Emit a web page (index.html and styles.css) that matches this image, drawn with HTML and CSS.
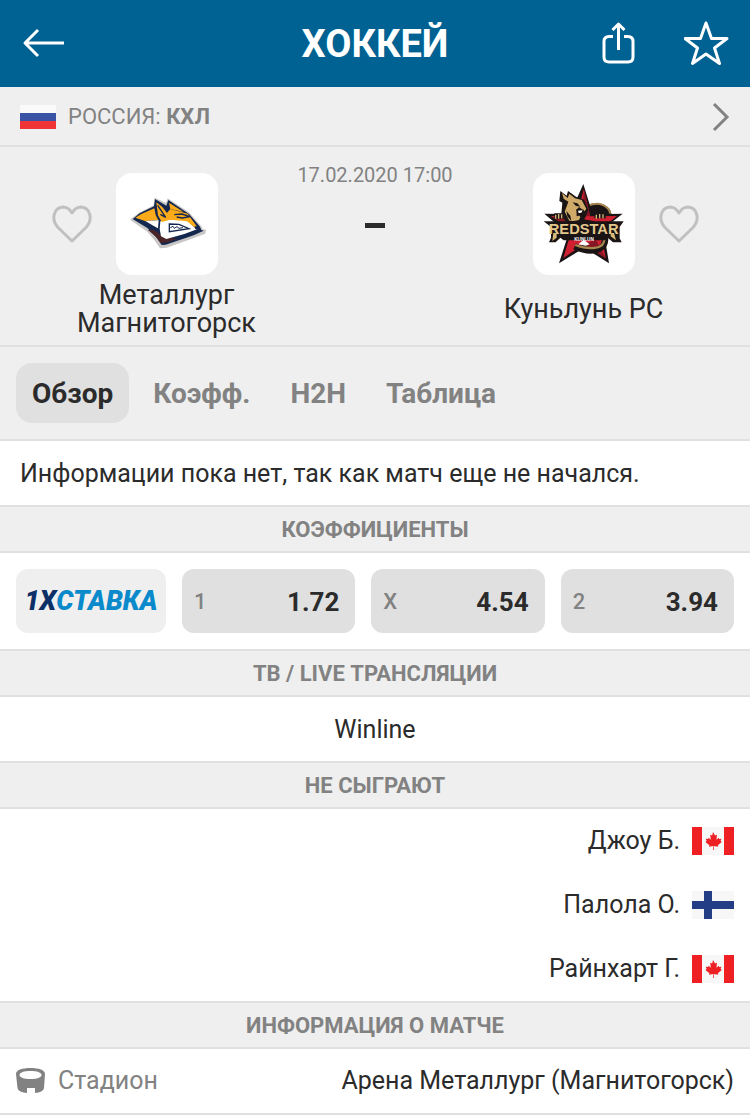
FILE: index.html
```html
<!DOCTYPE html>
<html lang="ru">
<head>
  <meta charset="UTF-8">
  <meta name="viewport" content="width=device-width, initial-scale=1.0">
  <title>Металлург Магнитогорск - Куньлунь РС</title>
  <link rel="stylesheet" href="styles.css">
</head>
<body>

  <!-- shared flag drawings -->
  <svg class="symbols" aria-hidden="true">
    <symbol id="flag-ca" viewBox="0 0 42 28">
      <path fill="#f7f7f7" d="M0 0h42v28H0z"/>
      <path fill="#ee2024" d="M0 0h10v28H0zM32 0h10v28H32z"/>
      <path fill="#ee2024" d="M21 5l2 3.500 2-.8-.6 5 2.200-2 .5 1.400 2.300-.4-.8 2.400 1.200.9-4 3.300.5 1.400-4.400-.6.1 4h-.8l.1-4-4.400.6.5-1.400-4-3.300 1.200-.9-.8-2.400 2.300.4.500-1.400 2.200 2-.6-5 2 .8z"/>
    </symbol>
    <symbol id="flag-fi" viewBox="0 0 42 28">
      <path fill="#f7f7f7" d="M0 0h42v28H0z"/>
      <path fill="#233e85" d="M12 0h8v28h-8zM0 10h42v8H0z"/>
    </symbol>
    <symbol id="heart" viewBox="0 0 40 40">
      <path fill="none" stroke="#c0c0c0" stroke-width="3" stroke-linejoin="round" d="M20 37L6 23.500C-1.500 15 2 3.500 11 3c4.500 0 7 2.500 9 6 2-3.500 4.500-6 9-6 9 .5 12.500 12 5 20.500z"/>
    </symbol>
  </svg>

  <header class="topbar">
    <button class="icon-btn back" aria-label="Назад">
      <svg width="44" height="32" viewBox="0 0 44 32"><path d="M44 15H5M18 2L5 15l13 13"/></svg>
    </button>
    <h1>ХОККЕЙ</h1>
    <div class="topbar-actions">
      <button class="icon-btn" aria-label="Поделиться">
        <svg width="34" height="44" viewBox="0 0 34 44"><path d="M11 14.500H7q-5 0-5 5V35q0 5 5 5h19q5 0 5-5V19.500q0-5-5-5h-4M16.500 28V2M10.500 8l6-6 6 6"/></svg>
      </button>
      <button class="icon-btn" aria-label="В избранное">
        <svg width="46" height="46" viewBox="0 0 46 46"><path d="M22 2l5.500 15.500H43L30.500 27l5 15.500L22 33 8.500 42.500l5-15.500L1 17.500h15.500z"/></svg>
      </button>
    </div>
  </header>

  <a class="league" href="#">
    <svg class="flag-ru" width="36" height="24" viewBox="0 0 36 24">
      <path fill="#fafafa" d="M0 0h36v8H0z"/>
      <path fill="#3a54a5" d="M0 8h36v8H0z"/>
      <path fill="#ef3337" d="M0 16h36v8H0z"/>
    </svg>
    <span>РОССИЯ: <b>КХЛ</b></span>
    <svg class="chevron" width="18" height="30" viewBox="0 0 18 30"><path d="M2 2l13 13L2 28"/></svg>
  </a>

  <section class="match">
    <div class="team home">
      <button class="icon-btn fav" aria-label="В избранное: Металлург"><svg width="40" height="40"><use href="#heart"/></svg></button>
      <div class="crest">
        <svg viewBox="-12 -21 306 306">
          <!-- silver edge, then navy body -->
          <path fill="#c9c6c6" d="M30 119L55 100 101 76l2-23 35 15 5-13 64 42 38 43 3 8 10 1-2 12-32 12-84 30-20 2-15-22-22-27z"/>
          <path fill="#14274f" d="M38 117L60 99l42-20 3-22 34 20 6-17 62 42 33 38 4 10 7 2-30 14-84 28-12 1-15-22-28-29z"/>
          <path fill="#4a2428" d="M84 150l24 20 14 19 20-2 30-10-40-6-30-21z"/>
          <path fill="#fbaa19" d="M46 113l18-11 39-17 4 20 8 16-40 2z"/>
          <path fill="#fff" d="M76 123l40-2-2 24-14-8z"/>
          <!-- muzzle -->
          <path fill="#fff" d="M121 124l28-6 52 2 24 24 6 4-38 14-54 15-16-8-4-22z"/>
          <path fill="#fbaa19" d="M109 67l18 14 14 18 10-12 52 14 27 38-7 3-22-18-50-5-26 7-11-20z"/>
          <path fill="#fbaa19" d="M147 68l44 28-40-9z"/>
          <path fill="none" stroke="#14274f" stroke-width="4" d="M113 76l24 36-16-9M163 104l22-2 25 8-23 4-17-3"/>
          <path fill="#fff" stroke="#14274f" stroke-width="4" d="M148 132l29 1 30 13-59 9z"/>
          <path fill="none" stroke="#14274f" stroke-width="3" d="M151 143l8-4 4 6 8-5 6 5 12-2"/>
          <path fill="#14274f" d="M224 139l8 2 3 8-9-2z"/>
        </svg>
      </div>
      <p class="team-name">Металлург<br>Магнитогорск</p>
    </div>

    <div class="score">
      <time datetime="2020-02-17T17:00">17.02.2020 17:00</time>
      <span class="dash"></span>
    </div>

    <div class="team away">
      <div class="crest">
        <svg viewBox="-6 -6 306 306">
          <!-- dragon body behind the star -->
          <ellipse cx="183" cy="118" rx="46" ry="33" fill="#1b1415"/>
          <path fill="none" stroke="#a98750" stroke-width="6" d="M160 92c34-14 62 2 66 24"/>
          <path fill="#1b1415" d="M145 27l28 91 90-2-58 45 17 104-74-47-76 47 28-88-72-61 77 1z"/>
          <path fill="#d01f30" d="M146 43l19 81 81-1-49 39 15 88-65-43-62 42 25-84-62-42 78 1z"/>
          <path fill="#861624" d="M147 43l19 81h-25zM148 207l64 43-29-55zM48 124l62 14-8 18z"/>
          <path fill="none" stroke="#1b1415" stroke-width="19" d="M210 186c6 48-52 47-91 28"/>
          <path fill="none" stroke="#a98750" stroke-width="7" d="M208 190c2 36-50 34-87 20"/>
          <path fill="#fff" d="M130 208l16-14 18 14-12 4z"/>
          <!-- head -->
          <path fill="#1b1415" d="M76 48l19 14 4-14 24 17 24 9 13 30-10 26-19 27-34-8-18-32 3-34-9-5z"/>
          <path fill="#cfaa69" d="M81 54l17 15 5-13 17 14 20 5 14 26-5 8-17-13-8 9 12 22-7 14-26-4-14-27 11-30-14-9z"/>
          <path fill="#1b1415" d="M113 82l14 3 9 10-14-3zM124 103l23 1-9 17-13 3zM94 108l12 14 3 16-12-14z"/>
          <path fill="#fff" d="M129 107l14-1-4 7-8 1z"/>
          <!-- claws -->
          <path stroke="#1b1415" stroke-width="17" d="M58 123h30M178 121h34"/>
          <path stroke="#d6b878" stroke-width="4" d="M62 119v12M71 117v14M80 118v12M184 119v12M194 117v13M204 118v12"/>
          <path fill="#1b1415" d="M26 139h86l34-6 34 6h86l-12 17v34l6 12h-26l-16-14-8 8H86l-10-8-14 14H42l6-14v-32z"/>
          <path fill="#d6b878" d="M55 174h10v14l-13 10zM227 174h10l6 22-16-12z"/>
          <text x="146" y="177" class="crest-big" text-anchor="middle">REDSTAR</text>
          <text x="147" y="198" class="crest-small" text-anchor="middle">KUNLUN</text>
        </svg>
      </div>
      <button class="icon-btn fav" aria-label="В избранное: Куньлунь"><svg width="40" height="40"><use href="#heart"/></svg></button>
      <p class="team-name">Куньлунь РС</p>
    </div>
  </section>

  <nav class="tabs">
    <a class="tab active" href="#">Обзор</a>
    <a class="tab" href="#">Коэфф.</a>
    <a class="tab" href="#">H2H</a>
    <a class="tab" href="#">Таблица</a>
  </nav>

  <main>
    <p class="row">Информации пока нет, так как матч еще не начался.</p>

    <h2>КОЭФФИЦИЕНТЫ</h2>
    <div class="odds">
      <a class="bookmaker" href="#"><span>1X</span>СТАВКА</a>
      <button class="odd"><span>1</span><b>1.72</b></button>
      <button class="odd"><span>X</span><b>4.54</b></button>
      <button class="odd"><span>2</span><b>3.94</b></button>
    </div>

    <h2>ТВ / LIVE ТРАНСЛЯЦИИ</h2>
    <p class="row center">Winline</p>

    <h2>НЕ СЫГРАЮТ</h2>
    <ul class="missing">
      <li>Джоу Б. <svg width="42" height="28"><use href="#flag-ca"/></svg></li>
      <li>Палола О. <svg width="42" height="28"><use href="#flag-fi"/></svg></li>
      <li>Райнхарт Г. <svg width="42" height="28"><use href="#flag-ca"/></svg></li>
    </ul>

    <h2>ИНФОРМАЦИЯ О МАТЧЕ</h2>
    <div class="info">
      <svg width="30" height="26" viewBox="0 0 30 26">
        <path fill="#828282" fill-rule="evenodd" d="M14.500 0C23 0 29 2 29 6l-1 14c-.5 3-4 4.500-9 5v-5h-8v5c-5-.5-9-2-9.500-5L0 6c0-4 6-6 14.500-6zm0 3C8 3 3.500 4.500 3.500 7s4.500 4 11 4 11-1.500 11-4-4.500-4-11-4z"/>
      </svg>
      <span class="label">Стадион</span>
      <span class="value">Арена Металлург (Магнитогорск)</span>
    </div>
  </main>

</body>
</html>
```

FILE: styles.css
```css
* {
  box-sizing: border-box;
}

body {
  margin: 0;
  background: #fff;
  color: #2b2b2b;
  font-family: Roboto, "Noto Sans", sans-serif;
  font-size: 25px;
  line-height: 28px;
}

h1, h2, p, ul {
  margin: 0;
  padding: 0;
}

a {
  color: inherit;
  text-decoration: none;
}

button {
  font: inherit;
  color: inherit;
  border: 0;
  padding: 0;
  background: none;
}

svg {
  display: block;
}

.symbols {
  position: absolute;
  width: 0;
  height: 0;
}

/* header */
.topbar {
  display: grid;
  grid-template-columns: 1fr auto 1fr;
  align-items: center;
  height: 87px;
  padding: 0 20px;
  background: #006292;
  color: #fff;
}

.topbar h1 {
  font-size: 38px;
  line-height: 48px;
}

.topbar path {
  fill: none;
  stroke: #fff;
  stroke-width: 3;
  stroke-linejoin: round;
}

.back {
  justify-self: start;
}

.topbar-actions {
  display: flex;
  justify-content: flex-end;
  align-items: center;
  gap: 48px;
}

.league {
  display: flex;
  align-items: center;
  gap: 12px;
  height: 60px;
  padding: 2px 20px 0;
  background: #efefef;
  border-bottom: 2px solid #e0e0e0;
  color: #828282;
  font-size: 22px;
}

.chevron {
  margin-left: auto;
  fill: none;
  stroke: #828282;
  stroke-width: 3;
}

/* teams and score */
.match {
  display: grid;
  grid-template-columns: 1fr 168px 1fr;
  padding: 12px 0 8px;
  background: #efefef;
  border-bottom: 2px solid #e0e0e0;
}

.team {
  display: grid;
  grid-template-columns: 40px 102px 40px;
  justify-content: center;
  align-items: center;
  column-gap: 24px;
  row-gap: 6px;
  padding-top: 14px;
}

.home {
  padding-left: 42px;
}

.away {
  padding-right: 42px;
}

.away .crest {
  grid-column: 2;
}

.crest {
  width: 102px;
  height: 102px;
  border-radius: 16px;
  background: #fff;
}

.crest-big {
  font: bold 44px "Liberation Sans", sans-serif;
  fill: #e3c88c;
}

.crest-small {
  font: bold 14px "Liberation Sans", sans-serif;
  fill: #fff;
}

.team-name {
  grid-column: 1 / -1;
  display: flex;
  align-items: center;
  justify-content: center;
  min-height: 56px;
  font-size: 27px;
  text-align: center;
}

.score {
  display: flex;
  flex-direction: column;
  align-items: center;
  gap: 32px;
  color: #828282;
  font-size: 20px;
  line-height: 32px;
}

.dash {
  width: 20px;
  height: 5px;
  background: #2b2b2b;
}

/* tabs */
.tabs {
  display: flex;
  gap: 8px;
  padding: 16px;
  background: #efefef;
  border-bottom: 2px solid #e0e0e0;
  color: #828282;
  font-size: 28px;
  font-weight: bold;
}

.tab {
  padding: 17px 16px 15px;
  border-radius: 16px;
}

.tab.active {
  background: #e0e0e0;
  color: #2b2b2b;
}

.row {
  padding: 19px 20px 17px;
}

.center {
  text-align: center;
}

h2 {
  padding: 9px 20px 7px;
  background: #efefef;
  border-top: 2px solid #e0e0e0;
  border-bottom: 2px solid #e0e0e0;
  color: #828282;
  font-size: 22px;
  text-align: center;
}

/* odds */
.odds {
  display: grid;
  grid-template-columns: 150px 1fr 1fr 1fr;
  gap: 16px;
  padding: 16px;
}

.bookmaker {
  display: flex;
  align-items: center;
  justify-content: center;
  border-radius: 12px;
  background: #efefef;
  color: #0a8acb;
  font-size: 27px;
  font-style: italic;
  font-weight: 900;
}

.bookmaker span {
  color: #0b2f66;
}

.odd {
  display: flex;
  align-items: center;
  justify-content: space-between;
  height: 64px;
  padding: 2px 16px 0 12px;
  border-radius: 12px;
  background: #e0e0e0;
  font-size: 26px;
}

.odd span {
  color: #828282;
  font-size: 22px;
  font-weight: 500;
}

/* missing players */
.missing {
  list-style: none;
}

.missing li {
  display: flex;
  align-items: center;
  justify-content: flex-end;
  gap: 12px;
  height: 64px;
  padding: 0 16px;
}

.info {
  display: flex;
  align-items: center;
  gap: 12px;
  height: 66px;
  padding: 0 16px;
  border-bottom: 2px solid #e0e0e0;
}

.label {
  color: #828282;
}

.value {
  margin-left: auto;
}
```
